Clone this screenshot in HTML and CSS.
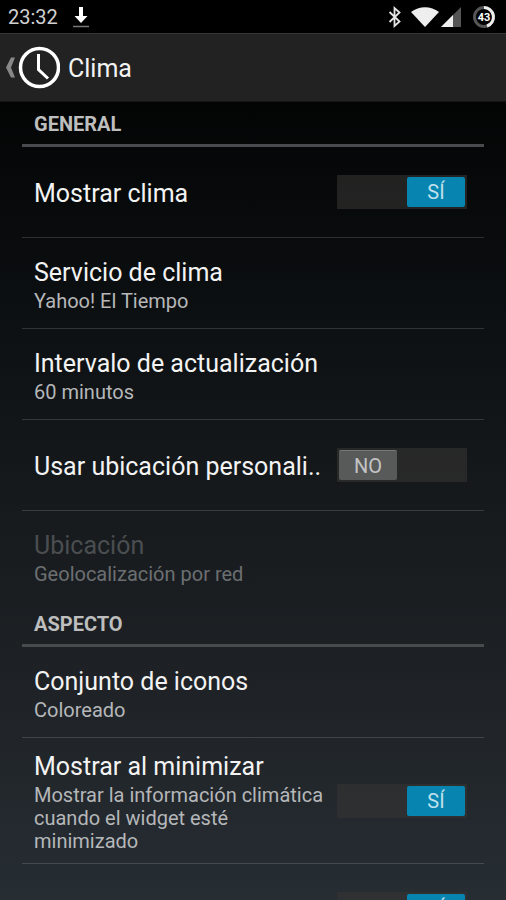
FILE: index.html
```html
<!DOCTYPE html>
<html lang="es">
<head>
<meta charset="utf-8">
<meta name="viewport" content="width=device-width, initial-scale=1">
<title>Clima</title>
<link rel="stylesheet" href="styles.css">
</head>
<body>
<div class="screen">
  <div class="status">
    <span class="time">23:32</span>
    <svg class="download" width="16" height="22" viewBox="0 0 16 22" aria-hidden="true">
      <path d="M6 1h4v9h4.500L8 17 1.500 10H6z" fill="#fff"/>
      <path d="M0 20.500h16" stroke="#777" stroke-width="1.500"/>
    </svg>
    <svg class="bluetooth" width="14" height="22" viewBox="0 0 14 22" fill="none" stroke="#e4e4e4" stroke-width="1.800" aria-hidden="true">
      <path d="M1.500 6l10 9.500-5 4.500V2l5 4.500-10 9.500"/>
    </svg>
    <svg class="wifi" width="28" height="20" viewBox="0 0 28 20" aria-hidden="true">
      <path d="M0 5C8-1.500 20-1.500 28 5L14 20z" fill="#eee"/>
    </svg>
    <svg class="signal" width="20" height="20" viewBox="0 0 20 20" aria-hidden="true">
      <path d="M20 0v20H0z" fill="#555"/>
      <path d="M12 8v12H0z" fill="#eee"/>
    </svg>
    <svg class="battery" width="24" height="24" viewBox="0 0 24 24" aria-hidden="true">
      <circle cx="12" cy="12" r="9.500" fill="none" stroke="#555" stroke-width="3"/>
      <path d="M12 2.500a9.500 9.500 0 0 1 3 18.500" fill="none" stroke="#eee" stroke-width="3"/>
      <text x="12" y="16" text-anchor="middle">43</text>
    </svg>
  </div>
  <header class="bar">
    <button class="up" type="button" aria-label="Atrás">
      <svg width="54" height="44" viewBox="0 0 54 44" fill="none" aria-hidden="true">
        <path d="M5 11.500h4L5 21.500l4 10H5L0 21.500z" fill="#888"/>
        <circle cx="33.500" cy="21.500" r="19" stroke="#fff" stroke-width="3.500"/>
        <path d="M32.500 8v15.500l9.500 9" stroke="#fff" stroke-width="3"/>
      </svg>
    </button>
    <h1>Clima</h1>
  </header>
  <main class="list">
    <h2>General</h2>
    <label class="row">
      <span class="text"><span class="title">Mostrar clima</span></span>
      <span class="switch"><input type="checkbox" checked><span class="thumb">SÍ</span></span>
    </label>
    <div class="row">
      <div class="text"><span class="title">Servicio de clima</span><span class="summary">Yahoo! El Tiempo</span></div>
    </div>
    <div class="row">
      <div class="text"><span class="title">Intervalo de actualización</span><span class="summary">60 minutos</span></div>
    </div>
    <label class="row">
      <span class="text"><span class="title">Usar ubicación personali..</span></span>
      <span class="switch off"><input type="checkbox"><span class="thumb">NO</span></span>
    </label>
    <div class="row disabled last">
      <div class="text"><span class="title">Ubicación</span><span class="summary">Geolocalización por red</span></div>
    </div>
    <h2>Aspecto</h2>
    <div class="row">
      <div class="text"><span class="title">Conjunto de iconos</span><span class="summary">Coloreado</span></div>
    </div>
    <label class="row">
      <span class="text"><span class="title">Mostrar al minimizar</span><span class="summary">Mostrar la información climática cuando el widget esté minimizado</span></span>
      <span class="switch"><input type="checkbox" checked><span class="thumb">SÍ</span></span>
    </label>
    <label class="row">
      <span class="text"><span class="title">Mostrar ubicación</span></span>
      <span class="switch"><input type="checkbox" checked><span class="thumb">SÍ</span></span>
    </label>
  </main>
</div>
</body>
</html>
```
FILE: styles.css
```css
* {
  box-sizing: border-box;
}

body {
  margin: 0;
  background: #000;
  color: #f3f3f3;
  font-family: Roboto, "Liberation Sans", sans-serif;
}

.screen {
  display: flex;
  flex-direction: column;
  height: 100vh;
  overflow: hidden;
  background: linear-gradient(#000, #030505 12%, #14181b 52%, #202428 80%, #262d33);
}

.status {
  display: flex;
  flex: none;
  align-items: center;
  height: 33px;
  padding: 0 10px 0 8px;
  background: #000;
}

.time {
  color: #d0d0d0;
  font-size: 20px;
}

.download {
  margin-left: 15px;
}

.bluetooth {
  margin-left: auto;
}

.wifi {
  margin-left: 9px;
}

.signal {
  margin-left: 2px;
}

.battery {
  margin-left: 11px;
}

.battery text {
  fill: #fff;
  font-size: 11px;
  font-weight: 700;
}

.bar {
  display: flex;
  flex: none;
  align-items: center;
  gap: 8px;
  height: 69px;
  padding-left: 6px;
  border-top: 1px solid #363636;
  border-bottom: 1px solid #151515;
  background: #222;
}

.up {
  display: flex;
  padding: 0;
  border: 0;
  background: none;
}

h1 {
  margin: 0;
  padding-top: 2px;
  font-size: 25px;
  font-weight: 400;
}

.list {
  flex: 1;
  min-height: 0;
  padding: 0 22px;
  overflow: hidden;
}

h2 {
  display: flex;
  align-items: center;
  height: 45px;
  margin: 0;
  padding: 2px 12px 0;
  border-bottom: 3px solid #484b4d;
  color: #bebebe;
  font-size: 20px;
  font-weight: 700;
  text-transform: uppercase;
}

.row {
  display: flex;
  align-items: center;
  gap: 12px;
  min-height: 91px;
  padding: 8px 17px 8px 12px;
  border-bottom: 1px solid #ffffff26;
}

.row.last {
  border-bottom-color: transparent;
}

.text {
  flex: 1;
  min-width: 0;
  padding-top: 4px;
}

.title,
.summary {
  display: block;
}

.title {
  font-size: 25px;
  line-height: 34px;
  white-space: nowrap;
}

.summary {
  padding-bottom: 2px;
  color: #b5b7b9;
  font-size: 20px;
  line-height: 23px;
}

.disabled .title {
  color: #4b4e50;
}

.disabled .summary {
  color: #6c6f71;
}

.switch {
  position: relative;
  display: flex;
  flex: none;
  justify-content: flex-end;
  width: 130px;
  height: 34px;
  padding: 2px;
  background: rgba(54, 52, 50, 0.6);
}

.switch.off {
  justify-content: flex-start;
}

.switch input {
  position: absolute;
  inset: 0;
  margin: 0;
  opacity: 0;
}

.thumb {
  display: flex;
  align-items: center;
  justify-content: center;
  width: 58px;
  border-radius: 2px;
  background: #0785b0;
  color: #bfe0ec;
  font-size: 20px;
}

.off .thumb {
  border-top: 1px solid #777;
  background: #585a5a;
  color: #c4c4c4;
}
```
